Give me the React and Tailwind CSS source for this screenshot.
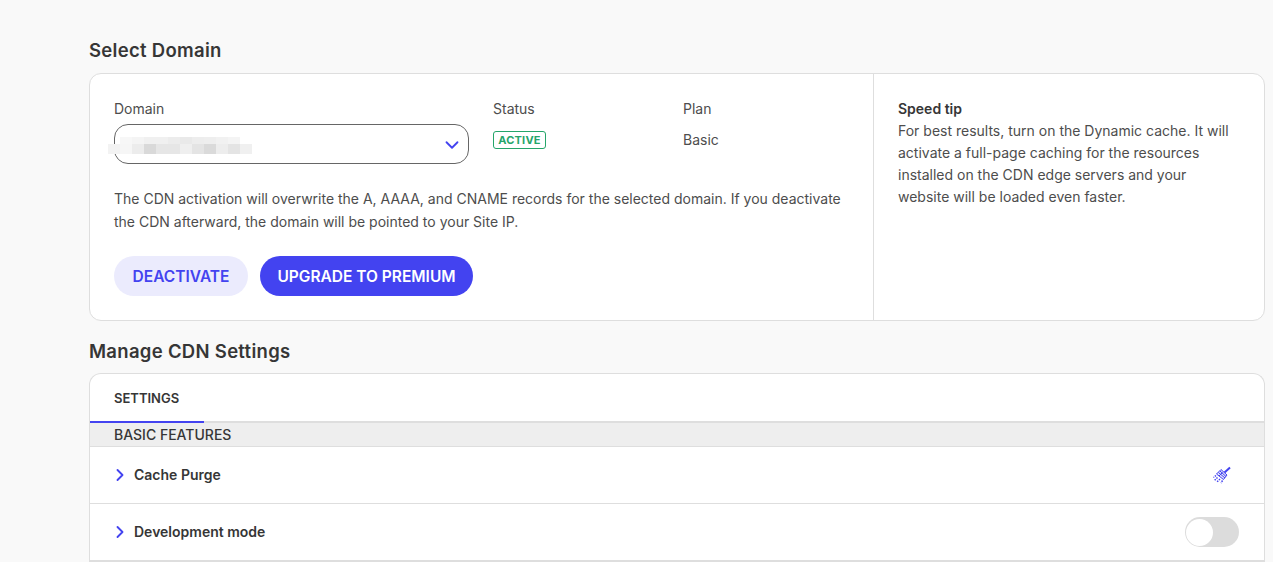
import React from 'react';
import { ChevronDown, ChevronRight } from 'lucide-react';

const heading = "text-[18.5px] leading-[24px] font-semibold text-[#363636] tracking-[0.3px]";

// pixelated-out domain name from the screenshot
const blurTop = ['#f7f7f7', '#f4f4f4', '#f0f0f0', '#f0f0f0', '#ececec', '#e9e9e9', '#ededed', '#eeeeee', '#f1f1f1', '#f4f4f4'];
const blurBottom = ['#f3f3f3', '#f6f6f6', '#ececec', '#d9d9d9', '#e6e6e6', '#e6e6e6', '#efefef', '#e4e4e4', '#dadada', '#ededed', '#e4e4e4', '#f0f0f0'];

const Row = ({ label, children }) => (
  <div className="flex items-center h-[57px] border-b border-[#dedede] pl-[24px] pr-[25px]">
    <ChevronRight size={20} strokeWidth={2.25} className="text-[#4343f0] -ml-[4px] mr-[4px]" />
    <span className="text-sm font-semibold text-[#363636]">{label}</span>
    <div className="ml-auto flex items-center">{children}</div>
  </div>
);

const App = () => {
  return (
    <div className="h-[562px] overflow-hidden bg-[#f9f9f9] pl-[89px] pr-[8px] pt-[38px] font-['Inter',sans-serif] text-[#363636]">
      <h2 className={heading}>Select Domain</h2>

      {/* Domain card */}
      <div className="mt-[11px] h-[248px] flex bg-white border border-[#dedede] rounded-[12px]">
        <div className="w-[784px] shrink-0 border-r border-[#dedede] pl-[24px] pt-[25px]">
          <div className="flex">
            <div className="w-[379px]">
              <div className="text-sm leading-[20px] text-[#4d4d4d]">Domain</div>
              <div className="relative mt-[5px] w-[355px] h-[40px] border border-[#666666] rounded-[14px] flex items-center justify-end pr-[5px]">
                <svg className="absolute left-[-7px] top-[12px]" width="144" height="17">
                  {blurTop.map((fill, i) => (
                    <rect key={i} x={12 + i * 12} y="0" width="12" height="7" fill={fill} />
                  ))}
                  {blurBottom.map((fill, i) => (
                    <rect key={i} x={i * 12} y="7" width="12" height="10" fill={fill} />
                  ))}
                </svg>
                <ChevronDown size={22} strokeWidth={2} className="text-[#4343f0] mt-[1px]" />
              </div>
            </div>
            <div className="w-[190px]">
              <div className="text-sm leading-[20px] text-[#4d4d4d]">Status</div>
              <div className="mt-[12px] w-[53px] h-[18px] border border-[#25a56a] rounded-[3px] flex items-center justify-center text-[11px] font-bold text-[#25a56a] tracking-[0.2px]">
                ACTIVE
              </div>
            </div>
            <div>
              <div className="text-sm leading-[20px] text-[#4d4d4d]">Plan</div>
              <div className="mt-[11px] text-sm leading-[20px] text-[#4d4d4d]">Basic</div>
            </div>
          </div>

          <p className="mt-[23px] w-[745px] text-sm leading-[23px] text-[#4d4d4d]">
            The CDN activation will overwrite the A, AAAA, and CNAME records for the selected domain. If you deactivate the CDN afterward, the domain will be pointed to your Site IP.
          </p>

          <div className="mt-[23px] flex gap-[12px]">
            <button className="h-[40px] w-[134px] pt-[1px] rounded-full bg-[#ebebfd] text-[#4343f0] text-[15.5px] font-semibold">DEACTIVATE</button>
            <button className="h-[40px] w-[213px] pt-[1px] rounded-full bg-[#4343f0] text-white text-[15.5px] font-semibold">UPGRADE TO PREMIUM</button>
          </div>
        </div>

        <div className="flex-1 pl-[24px] pr-[30px] pt-[24px] text-sm leading-[22px] text-[#4d4d4d]">
          <div className="font-semibold text-[#363636]">Speed tip</div>
          <p>For best results, turn on the Dynamic cache. It will activate a full-page caching for the resources installed on the CDN edge servers and your website will be loaded even faster.</p>
        </div>
      </div>

      <h2 className={`${heading} mt-[18px]`}>Manage CDN Settings</h2>

      {/* Settings card */}
      <div className="mt-[10px] bg-white border border-[#dedede] border-b-0 rounded-t-[12px]">
        <div className="h-[49px] border-b-2 border-[#dedede]">
          <div className="h-[49px] w-[114px] pl-[24px] pt-[15px] text-[13px] leading-[18px] font-semibold text-[#363636] border-b-2 border-[#4343f0]">
            SETTINGS
          </div>
        </div>
        <div className="h-[24px] bg-[#eeeeee] border-b border-[#dedede] pl-[24px] text-sm leading-[24px] font-medium text-[#363636]">
          BASIC FEATURES
        </div>
        <Row label="Cache Purge">
          {/* brush icon */}
          <svg width="18" height="18" viewBox="0 0 18 18" fill="none" stroke="#4343f0" strokeWidth="1" className="mr-[8px]">
            <path d="M17 1.5 L11.5 6.5" strokeWidth="2" />
            <path d="M8 3.5 L14 9 L10.5 13.5 L3.5 8 Z" fill="#e2e2fc" />
            <path d="M5.5 6.5 L12 12 M7 5 L13 10.5 M6 10 L9.5 6.5" />
            <path d="M3 9.5 L0.5 11.5 M4.5 11.5 L1 15 M7 13 L3.5 16.5 M9.5 14.5 L8 17" strokeDasharray="1.5 1" strokeWidth="1.5" />
          </svg>
        </Row>
        <div className="flex items-center h-[58px] border-b-2 border-[#dedede] pl-[24px] pr-[25px]">
          <ChevronRight size={20} strokeWidth={2.25} className="text-[#4343f0] -ml-[4px] mr-[4px]" />
          <span className="text-sm font-semibold text-[#363636]">Development mode</span>
          <div className="ml-auto w-[54px] h-[30px] rounded-full bg-[#dcdcdc] flex items-center pl-[1px]">
            <div className="w-[27px] h-[27px] rounded-full bg-white" />
          </div>
        </div>
      </div>
    </div>
  );
};

export default App;
